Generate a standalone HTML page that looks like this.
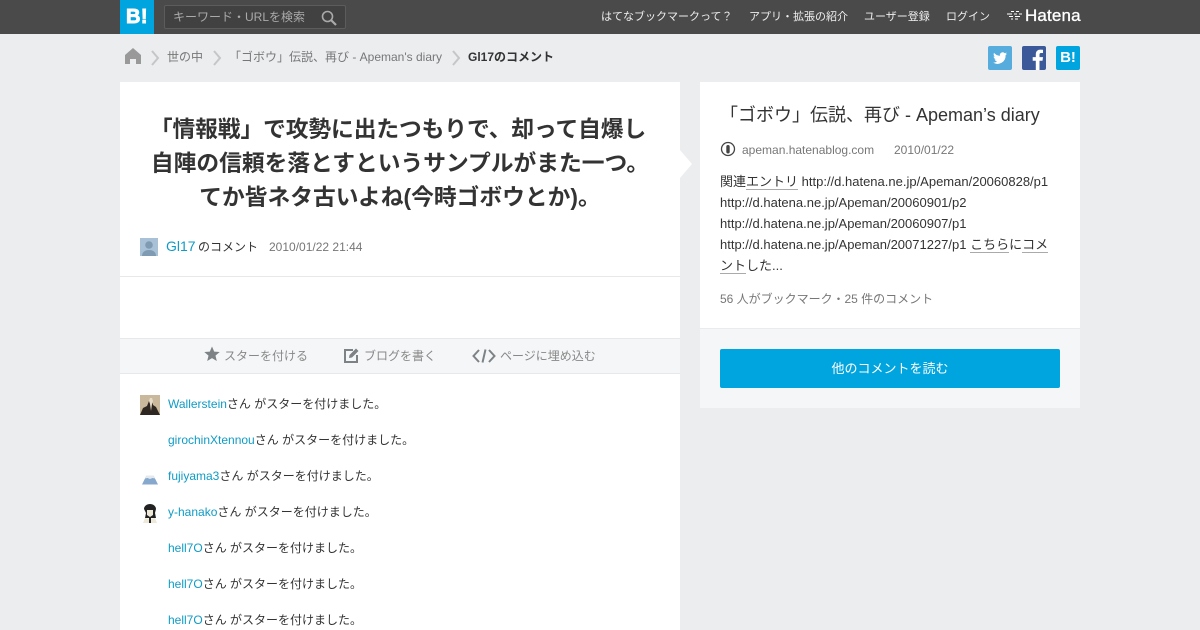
<!DOCTYPE html>
<html lang="ja"><head><meta charset="utf-8"><title>Gl17のコメント</title>
<style>
html,body{margin:0;padding:0;width:1200px;height:630px;overflow:hidden;background:#ebedef;font-family:"Liberation Sans","WenQuanYi Zen Hei","Noto Sans CJK JP",sans-serif;color:#333}
.a{position:absolute;white-space:nowrap}
a{color:inherit;text-decoration:none}
.u{border-bottom:1px solid #aaa}
.row{position:absolute;left:168px;font-size:12px;line-height:18px;color:#333;white-space:nowrap}
.row b{font-weight:normal;color:#0f9bc6}
</style></head><body>
<div class="a" style="left:0;top:0;width:1200px;height:34px;background:#4a4a4a"></div>
<div class="a" style="left:120px;top:0;width:34px;height:34px;background:#00a4de;color:#fff;font:bold 20px/34px 'Liberation Sans',sans-serif;-webkit-text-stroke:.9px #fff;text-align:center;letter-spacing:.5px">B!</div>
<div class="a" style="left:164px;top:5px;width:180px;height:22px;border:1px solid #5c5c5c;background:#414141;border-radius:2px"></div>
<div class="a" style="left:173px;top:8px;font-size:12px;line-height:18px;color:#aaa">キーワード・URLを検索</div>
<svg class="a" style="left:320px;top:9px" width="18" height="18" viewBox="0 0 18 18"><circle cx="7.500" cy="7.500" r="5" fill="none" stroke="#aaa" stroke-width="1.600"/><path d="M11 11l5 5" stroke="#aaa" stroke-width="2.200"/></svg>
<div class="a" style="left:601px;top:8px;font-size:11px;line-height:18px;color:#eee">はてなブックマークって？</div>
<div class="a" style="left:749px;top:8px;font-size:11px;line-height:18px;color:#eee">アプリ・拡張の紹介</div>
<div class="a" style="left:864px;top:8px;font-size:11px;line-height:18px;color:#eee">ユーザー登録</div>
<div class="a" style="left:946px;top:8px;font-size:11px;line-height:18px;color:#eee">ログイン</div>
<svg class="a" style="left:1006px;top:10px" width="17" height="12" viewBox="0 0 17 12"><path d="M5 1.500h3M10 1.500h3M1 4h5M8 4h3M13 4h3M3 6.500h4M9 6.500h5M5 9h2M9 9h3" stroke="#fff" stroke-width="1.100"/></svg>
<div class="a" style="left:1025px;top:6px;font:17px/20px 'Liberation Sans',sans-serif;-webkit-text-stroke:.3px #fff;color:#fff;letter-spacing:.15px">Hatena</div>

<svg class="a" style="left:124px;top:47px" width="18" height="18" viewBox="0 0 18 18"><path d="M9 1L1 8v9h5v-5h6v5h5V8z" fill="#999"/></svg>
<svg class="a" style="left:150px;top:50px" width="10" height="16" viewBox="0 0 10 16"><path d="M2 1l6 7-6 7" fill="none" stroke="#c4c6c8" stroke-width="2"/></svg>
<div class="a" style="left:167px;top:48px;font-size:12px;line-height:18px;color:#777">世の中</div>
<svg class="a" style="left:212px;top:50px" width="10" height="16" viewBox="0 0 10 16"><path d="M2 1l6 7-6 7" fill="none" stroke="#c4c6c8" stroke-width="2"/></svg>
<div class="a" style="left:229px;top:48px;font-size:12px;line-height:18px;color:#777">「ゴボウ」伝説、再び - Apeman's diary</div>
<svg class="a" style="left:451px;top:50px" width="10" height="16" viewBox="0 0 10 16"><path d="M2 1l6 7-6 7" fill="none" stroke="#c4c6c8" stroke-width="2"/></svg>
<div class="a" style="left:468px;top:48px;font-size:12px;line-height:18px;color:#333;font-weight:bold">Gl17のコメント</div>

<svg class="a" style="left:988px;top:46px" width="24" height="24" viewBox="0 0 24 24"><rect width="24" height="24" rx="2" fill="#55acdd"/><g transform="translate(1.500 1.500) scale(.875)"><path d="M20 7c-.6.300-1.200.400-1.900.500.700-.4 1.200-1 1.400-1.800-.6.400-1.300.600-2 .800a3.300 3.300 0 0 0-5.600 3C9.200 9.400 6.800 8.200 5.200 6.200c-.9 1.500-.4 3.400 1 4.400-.5 0-1-.2-1.500-.4 0 1.600 1.100 3 2.600 3.300-.5.100-1 .2-1.500.1.400 1.300 1.600 2.200 3 2.300A6.600 6.600 0 0 1 4 17.200a9.300 9.300 0 0 0 14.400-8.300c.6-.5 1.200-1.100 1.600-1.900z" fill="#fff"/></g></svg>
<svg class="a" style="left:1022px;top:46px" width="24" height="24" viewBox="0 0 24 24"><rect width="24" height="24" rx="2" fill="#3b5998"/><path d="M17.500 24v-9.300h3l.5-3.600h-3.500V8.800c0-1 .3-1.800 1.800-1.800H21V3.800c-.4 0-1.500-.2-2.700-.2-2.700 0-4.500 1.700-4.500 4.700v2.800h-3.100v3.600h3.100V24z" fill="#fff"/></svg>
<div class="a" style="left:1056px;top:46px;width:24px;height:24px;background:#00a4de;border-radius:2px;color:#fff;font:bold 15px/24px 'Liberation Sans',sans-serif;text-align:center">B!</div>

<div class="a" style="left:120px;top:82px;width:560px;height:548px;background:#fff"></div>
<div class="a" style="left:120px;top:112px;width:560px;text-align:center;font-size:22.750px;line-height:34px;font-weight:bold;color:#333;white-space:normal"><span style="letter-spacing:-.1px;position:relative;left:-2px">「情報戦」で攻勢に出たつもりで、却って自爆し</span><br>自陣の信頼を落とすというサンプルがまた一つ。<br>てか皆ネタ古いよね(今時ゴボウとか)。</div>

<svg class="a" style="left:140px;top:238px" width="18" height="18" viewBox="0 0 18 18"><rect width="18" height="18" fill="#a9c1d6"/><circle cx="9" cy="7" r="3.800" fill="#7f9bb3"/><path d="M2 18c0-4 3-6 7-6s7 2 7 6z" fill="#7f9bb3"/></svg>
<div class="a" style="left:166px;top:237px;font-size:14px;line-height:18px;color:#0f9bc6">Gl17</div>
<div class="a" style="left:198px;top:238px;font-size:12px;line-height:18px;color:#333">のコメント</div>
<div class="a" style="left:269px;top:238px;font-size:12px;line-height:18px;color:#777">2010/01/22 21:44</div>
<div class="a" style="left:120px;top:276px;width:560px;height:1px;background:#e6e8ea"></div>

<div class="a" style="left:120px;top:338px;width:560px;height:34px;background:#f5f6f7;border-top:1px solid #e6e8ea;border-bottom:1px solid #e6e8ea"></div>
<svg class="a" style="left:204px;top:346px" width="16" height="16" viewBox="0 0 16 16"><path d="M8 .5l2.200 5.100 5.500.4-4.200 3.600 1.300 5.400L8 12.100 3.200 15l1.300-5.400L.3 6l5.500-.4z" fill="#7d8287"/></svg>
<div class="a" style="left:224px;top:347px;font-size:12px;line-height:18px;color:#888">スターを付ける</div>
<svg class="a" style="left:343px;top:347px" width="17" height="17" viewBox="0 0 17 17"><path d="M10 3H2v12h12V8" fill="none" stroke="#7d8287" stroke-width="2"/><path d="M6 11l.5-3L13 1.500l2.500 2.500L9 10.500z" fill="#7d8287"/></svg>
<div class="a" style="left:364px;top:347px;font-size:12px;line-height:18px;color:#888">ブログを書く</div>
<svg class="a" style="left:472px;top:348px" width="24" height="16" viewBox="0 0 24 16"><path d="M7 2L1.500 8 7 14M17 2l5.500 6L17 14M13.500 1.500l-3 13" fill="none" stroke="#7d8287" stroke-width="2"/></svg>
<div class="a" style="left:500px;top:347px;font-size:12px;line-height:18px;color:#888">ページに埋め込む</div>

<svg class="a" style="left:140px;top:395px" width="20" height="20" viewBox="0 0 20 20"><rect width="20" height="20" fill="#c9b89b"/><path d="M0 20l3-7 4-2 2-5 3-.5 1 4.500 3 2 4 8z" fill="#2e2620"/><path d="M9 6l1-3h2l1 3-1 3-1 7-1-7z" fill="#e6dccb"/></svg>
<div class="row" style="top:395px"><b>Wallerstein</b>さん がスターを付けました。</div>
<div class="row" style="top:431px"><b>girochinXtennou</b>さん がスターを付けました。</div>
<svg class="a" style="left:140px;top:467px" width="20" height="20" viewBox="0 0 20 20"><path d="M2 17.500l4.500-9h7l4.500 9z" fill="#86a8cc"/><path d="M6.500 8.500h7l1.500 3-2.500-.5-2.500 1-2.500-1-2.500.5z" fill="#e4e9ef"/></svg>
<div class="row" style="top:467px"><b>fujiyama3</b>さん がスターを付けました。</div>
<svg class="a" style="left:140px;top:503px" width="20" height="20" viewBox="0 0 20 20"><path d="M4 6c0-3 3-5 6-5s6 2 6 5l-1 4 1 5H5l1-5z" fill="#222"/><path d="M7 7h6v5l-3 2-3-2zM3 20l2-5 5 1 5-1 2 5z" fill="#eee8d8"/><path d="M9 15h2v5H9z" fill="#222"/></svg>
<div class="row" style="top:503px"><b>y-hanako</b>さん がスターを付けました。</div>
<div class="row" style="top:539px"><b>hell7O</b>さん がスターを付けました。</div>
<div class="row" style="top:575px"><b>hell7O</b>さん がスターを付けました。</div>
<div class="row" style="top:611px"><b>hell7O</b>さん がスターを付けました。</div>

<div class="a" style="left:680px;top:150px;width:0;height:0;border-left:12px solid #fff;border-top:14px solid transparent;border-bottom:14px solid transparent"></div>

<div class="a" style="left:700px;top:82px;width:380px;height:246px;background:#fff;border-bottom:1px solid #e9ebed"></div>
<div class="a" style="left:700px;top:329px;width:380px;height:79px;background:#f5f6f8"></div>
<div class="a" style="left:720px;top:102px;font-size:18px;line-height:26px;color:#333">「ゴボウ」伝説、再び - Apeman’s diary</div>
<svg class="a" style="left:720px;top:141px" width="16" height="16" viewBox="0 0 16 16"><circle cx="8" cy="8" r="6.500" fill="#fff" stroke="#444" stroke-width="1.300"/><rect x="6.300" y="4" width="3.400" height="8.500" rx="1.700" fill="#444"/></svg>
<div class="a" style="left:742px;top:141px;font-size:12px;line-height:18px;color:#777">apeman.hatenablog.com</div>
<div class="a" style="left:894px;top:141px;font-size:12px;line-height:18px;color:#777">2010/01/22</div>
<div class="a" style="left:720px;top:171px;font-size:13px;line-height:21px;color:#333">関連<span class="u">エントリ</span> http://d.hatena.ne.jp/Apeman/20060828/p1<br>http://d.hatena.ne.jp/Apeman/20060901/p2<br>http://d.hatena.ne.jp/Apeman/20060907/p1<br>http://d.hatena.ne.jp/Apeman/20071227/p1 <span class="u">こちら</span>に<span class="u">コメ</span><br><span class="u">ント</span>した...</div>
<div class="a" style="left:720px;top:290px;font-size:12px;line-height:18px;color:#777">56 人がブックマーク・25 件のコメント</div>
<div class="a" style="left:720px;top:349px;width:340px;height:39px;background:#00a4de;border-radius:2px;color:#fff;font-size:13px;line-height:39px;text-align:center">他のコメントを読む</div>
</body></html>
